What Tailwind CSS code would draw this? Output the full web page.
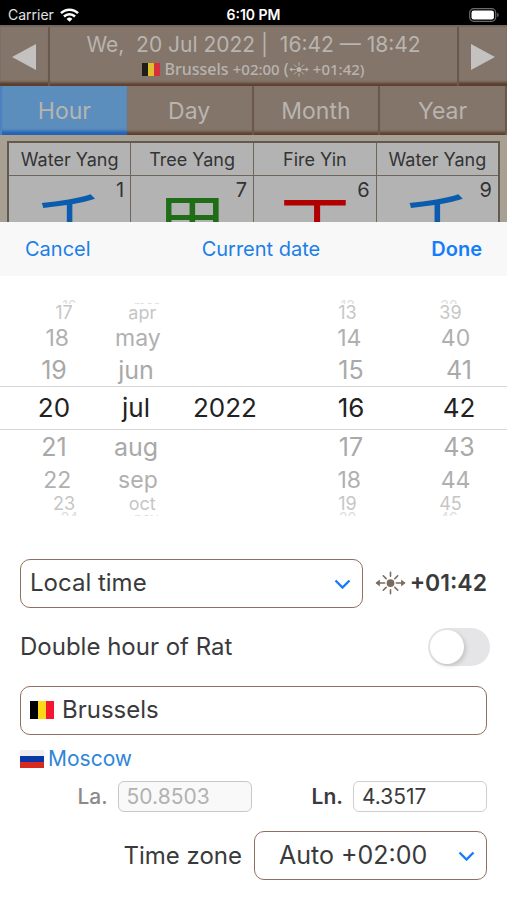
<!DOCTYPE html>
<html lang="en">
<head>
<meta charset="utf-8">
<meta name="viewport" content="width=device-width, initial-scale=1">
<title>Date picker</title>
<script src="https://cdn.jsdelivr.net/npm/@tailwindcss/browser@4"></script>
</head>
<body class="min-h-screen bg-white font-['Inter','Noto_Sans_CJK_SC',sans-serif] text-[#3a3a3c]">

<svg class="hidden" aria-hidden="true">
  <symbol id="sun" viewBox="0 0 32 24">
    <circle cx="16" cy="12" r="4" fill="currentColor"/>
    <g stroke="currentColor" stroke-width="1.6" stroke-linecap="round" fill="none">
      <path d="M16 1v4M16 19v4M8.500 4.500l3 3M23.500 4.500l-3 3M8.500 19.500l3-3M23.500 19.500l-3-3M2 12h8M22 12h8"/>
    </g>
    <path d="M.5 12l4.500-3.500v7zM31.500 12l-4.500-3.500v7z" fill="currentColor"/>
  </symbol>
  <symbol id="belgium" viewBox="0 0 24 18" preserveAspectRatio="none">
    <path fill="#000" d="M0 0h8v18H0z"/><path fill="#fcd916" d="M8 0h8v18H8z"/><path fill="#f31830" d="M16 0h8v18h-8z"/>
  </symbol>
</svg>

<div class="grid h-[25px] grid-cols-3 items-center bg-black px-2 text-[14px] text-white">
  <div class="flex items-center gap-[6px] pt-1 leading-none text-[#e2e2e2]">
    <span>Carrier</span>
    <svg class="h-[14px] w-[19px]" viewBox="0 0 19 14" fill="none" stroke="#fff" stroke-width="2.500" aria-hidden="true">
      <path d="M1 5.200a12 12 0 0 1 17 0M4 8.500a7.800 7.800 0 0 1 11 0"/>
      <path d="M9.500 13.800L6.600 10.900a4.100 4.100 0 0 1 5.800 0z" fill="#fff" stroke="none"/>
    </svg>
  </div>
  <span class="pt-1 text-center leading-none font-semibold">6:10 PM</span>
  <svg class="mt-1 h-[14px] w-[30px] justify-self-end" viewBox="0 0 30 14" aria-hidden="true">
    <rect x=".7" y=".7" width="26" height="12.600" rx="4" fill="none" stroke="#6b6b6b" stroke-width="1.200"/>
    <rect x="2.500" y="2.500" width="22.400" height="9" rx="2.200" fill="#fff"/>
    <path d="M28.200 4.800v4.400q1.500-.6 1.500-2.200t-1.500-2.200" fill="#6b6b6b"/>
  </svg>
</div>

<header class="bg-[#84756a] text-[#b8b4b0]">
  <div class="flex h-[61px] border-t-2 border-[#75675d] shadow-[inset_0_-5px_3px_-2px_#5c3f2e]">
    <button type="button" aria-label="Previous" class="flex w-[50px] items-center justify-center border-r-2 border-[#6b584c] shadow-[inset_0_-5px_3px_-2px_#5c3f2e]">
      <svg class="h-[28px] w-[24px]" viewBox="0 0 24 28" aria-hidden="true"><path d="M0 14L24 1v26z" fill="#c4c2c0"/></svg>
    </button>
    <div class="flex flex-1 flex-col items-center pt-1">
      <div class="text-[21px] leading-[28px] whitespace-pre">We,  20 Jul 2022 |  16:42 — 18:42</div>
      <div class="flex items-center text-[16px] leading-[20px] font-medium font-['Noto_Sans']">
        <svg class="mr-1 h-[13px] w-[18px] opacity-75" aria-hidden="true"><use href="#belgium"/></svg>
        <span>Brussels <span class="text-[15px]">+02:00</span> (</span>
        <svg class="mr-1 h-[15px] w-[20px]" aria-hidden="true"><use href="#sun"/></svg>
        <span class="text-[15px]">+01:42)</span>
      </div>
    </div>
    <button type="button" aria-label="Next" class="flex w-[50px] items-center justify-center border-l-2 border-[#6b584c] shadow-[inset_0_-5px_3px_-2px_#5c3f2e]">
      <svg class="h-[28px] w-[24px]" viewBox="0 0 24 28" aria-hidden="true"><path d="M24 14L0 1v26z" fill="#c4c2c0"/></svg>
    </button>
  </div>
  <nav class="grid h-[49px] grid-cols-4 text-[23px] *:pt-[2px]">
    <button type="button" class="border-l-2 border-[#4c82c0] bg-[#5b8dbd] shadow-[inset_0_-6px_3px_-2px_#2463b4]">Hour</button>
    <button type="button" class="border-r-2 border-[#6b584c] shadow-[inset_0_-5px_3px_-2px_#5c3f2e]">Day</button>
    <button type="button" class="border-r-2 border-[#6b584c] shadow-[inset_0_-5px_3px_-2px_#5c3f2e]">Month</button>
    <button type="button" class="border-r-2 border-[#6b584c] shadow-[inset_0_-5px_3px_-2px_#5c3f2e]">Year</button>
  </nav>
</header>

<main class="overflow-hidden bg-[#a8a193] px-[7px] pt-[6px]">
  <table class="w-full table-fixed border-collapse border-2 border-b-0 border-[#62594f] bg-[#b3b3b3] text-[#333]">
    <thead>
      <tr class="h-[33px] text-[18px] leading-[28px] whitespace-nowrap">
        <th scope="col" class="border border-[#6e655b] p-0 pt-[2px] font-normal">Water Yang</th>
        <th scope="col" class="border border-[#6e655b] p-0 pt-[2px] font-normal">Tree Yang</th>
        <th scope="col" class="border border-[#6e655b] p-0 pt-[2px] font-normal">Fire Yin</th>
        <th scope="col" class="border border-[#6e655b] p-0 pt-[2px] font-normal">Water Yang</th>
      </tr>
    </thead>
    <tbody>
      <tr>
        <td class="border-x border-[#6e655b] p-0"><div class="grid h-[46px] overflow-hidden pt-[2px] text-[20px] leading-[24px]"><span class="col-start-1 row-start-1 pr-[6px] text-right">1</span><span class="col-start-1 row-start-1 pt-[7px] text-center text-[70px] leading-[76px] text-[#0b5cad] font-['Noto_Sans_CJK_SC']">壬</span></div></td>
        <td class="border-x border-[#6e655b] p-0"><div class="grid h-[46px] overflow-hidden pt-[2px] text-[20px] leading-[24px]"><span class="col-start-1 row-start-1 pr-[6px] text-right">7</span><span class="col-start-1 row-start-1 pt-[7px] text-center text-[70px] leading-[76px] text-[#206d17] font-['Noto_Sans_CJK_SC']">甲</span></div></td>
        <td class="border-x border-[#6e655b] p-0"><div class="grid h-[46px] overflow-hidden pt-[2px] text-[20px] leading-[24px]"><span class="col-start-1 row-start-1 pr-[6px] text-right">6</span><span class="col-start-1 row-start-1 pt-[7px] text-center text-[70px] leading-[76px] text-[#b00000] font-['Noto_Sans_CJK_SC']">丁</span></div></td>
        <td class="border-x border-[#6e655b] p-0"><div class="grid h-[46px] overflow-hidden pt-[2px] text-[20px] leading-[24px]"><span class="col-start-1 row-start-1 pr-[6px] text-right">9</span><span class="col-start-1 row-start-1 pt-[7px] text-center text-[70px] leading-[76px] text-[#0b5cad] font-['Noto_Sans_CJK_SC']">壬</span></div></td>
      </tr>
    </tbody>
  </table>
</main>

<section aria-label="Choose date">
  <div class="flex h-[54px] items-center justify-between bg-[#f8f8f8] px-[25px] text-[20px] text-[#1b7fe6]">
    <button type="button">Cancel</button>
    <button type="button">Current date</button>
    <button type="button" class="font-semibold text-[#147efb]">Done</button>
  </div>

  <div class="py-6">
    <div class="overflow-hidden text-center text-[#a9a9a9] *:grid *:grid-cols-[84fr_80fr_98fr_154fr_62fr] *:items-center *:pr-[17px] *:pl-3">
      <div class="h-1 items-end! overflow-hidden pr-[29px]! pl-[30px]! text-[14px] leading-[12px] text-[#dedede]"><span>16</span><span>mar</span><span></span><span>12</span><span>38</span></div>
      <div class="h-[18px] pr-[27px]! pl-[24px]! text-[18px] leading-[18px] text-[#c6c6c6]"><span>17</span><span>apr</span><span></span><span>13</span><span>39</span></div>
      <div class="h-8 pr-[21px]! pl-4! text-[23px] leading-8 text-[#b0b0b0]"><span>18</span><span>may</span><span></span><span>14</span><span>40</span></div>
      <div class="h-8 text-[25px] leading-8"><span>19</span><span>jun</span><span></span><span>15</span><span>41</span></div>
      <div class="h-11 border-y border-[#d6d6d6] text-[26px] leading-[42px] text-[#222]"><span>20</span><span>jul</span><span>2022</span><span>16</span><span>42</span></div>
      <div class="h-[34px] text-[25px] leading-[34px]"><span>21</span><span>aug</span><span></span><span>17</span><span>43</span></div>
      <div class="h-8 pr-[21px]! pl-4! text-[23px] leading-8 text-[#b0b0b0]"><span>22</span><span>sep</span><span></span><span>18</span><span>44</span></div>
      <div class="h-4 pr-[27px]! pl-[24px]! text-[18px] leading-4 text-[#c6c6c6]"><span>23</span><span>oct</span><span></span><span>19</span><span>45</span></div>
      <div class="h-1 items-start! overflow-hidden pr-[29px]! pl-[30px]! text-[14px] leading-[12px] text-[#dedede]"><span>24</span><span>nov</span><span></span><span>20</span><span>46</span></div>
    </div>
  </div>

  <form class="flex flex-col px-5 pt-[19px] pb-5 text-[24px]">
    <div class="flex items-center gap-3">
      <div class="relative flex-1">
        <select aria-label="Time type" class="h-[49px] w-full appearance-none rounded-[10px] border border-[#8f705d] bg-white pl-[9px]"><option>Local time</option></select>
        <svg class="pointer-events-none absolute top-[20px] right-3 h-[10px] w-[17px]" viewBox="0 0 17 10" fill="none" stroke="#147efb" stroke-width="2.400" aria-hidden="true"><path d="M1.500 1.500l7 7 7-7"/></svg>
      </div>
      <div class="flex items-center gap-1">
        <svg class="h-[24px] w-[31px] text-[#7b6a5e]" aria-hidden="true"><use href="#sun"/></svg>
        <span class="text-[23px] font-semibold">+01:42</span>
      </div>
    </div>

    <div class="-mr-[3px] mt-5 flex items-center justify-between">
      <label for="rat">Double hour of Rat</label>
      <input id="rat" type="checkbox" role="switch" class="h-[38px] w-[62px] appearance-none rounded-full bg-[#e5e5e7] p-[2px] before:block before:size-[34px] before:rounded-full before:bg-white before:shadow-[2px_2px_4px_#00000026] checked:bg-green-500 checked:before:ml-6">
    </div>

    <label class="mt-5 flex h-[49px] items-center gap-2 rounded-[10px] border border-[#8f705d] px-[9px]">
      <svg class="h-[18px] w-6" aria-hidden="true"><use href="#belgium"/></svg>
      <input type="text" aria-label="City" value="Brussels" class="min-w-0 flex-1 bg-transparent">
    </label>

    <a href="#" class="mt-[10px] flex items-center gap-1 self-start text-[21px] leading-[28px] text-[#2e86d8]">
      <svg class="h-[18px] w-6" viewBox="0 0 24 18" aria-hidden="true"><path fill="#eee" d="M0 0h24v6H0z"/><path fill="#0b36a6" d="M0 6h24v6H0z"/><path fill="#d62b1e" d="M0 12h24v6H0z"/></svg>
      Moscow
    </a>

    <div class="mt-2 flex items-center justify-end gap-[10px] text-[21px]">
      <label for="lat" class="font-medium text-[#8a8a8a]">La.</label>
      <input id="lat" type="text" value="50.8503" disabled class="h-[31px] w-[134px] rounded-[6px] border border-[#c8c8c8] bg-[#f9f9f9] px-2 text-[#b2b2b2]">
      <label for="lon" class="pl-[50px] font-semibold">Ln.</label>
      <input id="lon" type="text" value="4.3517" class="h-[31px] w-[134px] rounded-[6px] border border-[#cfcfcf] px-2">
    </div>

    <div class="mt-[19px] flex items-center justify-end gap-3">
      <label for="zone">Time zone</label>
      <div class="relative w-[233px]">
        <select id="zone" class="h-[49px] w-full appearance-none rounded-[10px] border border-[#8f705d] bg-white pl-6 text-[25px]"><option>Auto +02:00</option></select>
        <svg class="pointer-events-none absolute top-[20px] right-3 h-[10px] w-[17px]" viewBox="0 0 17 10" fill="none" stroke="#147efb" stroke-width="2.400" aria-hidden="true"><path d="M1.500 1.500l7 7 7-7"/></svg>
      </div>
    </div>
  </form>
</section>
</body>
</html>
